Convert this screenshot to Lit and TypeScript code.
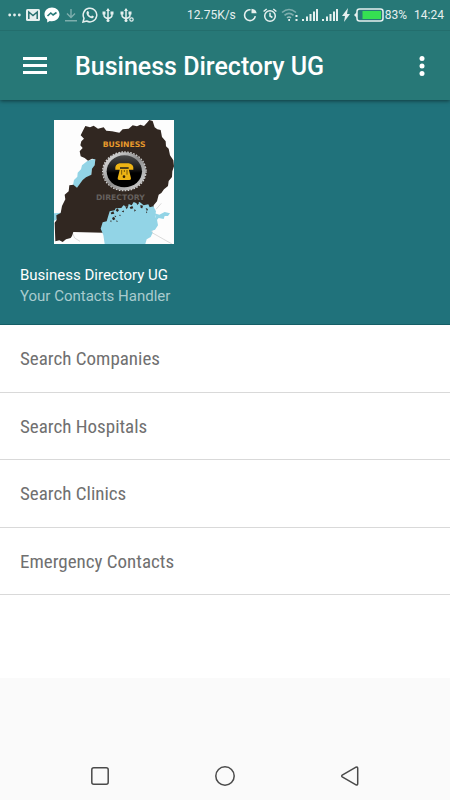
import { LitElement, html, css, svg } from "lit";
import { customElement } from "lit/decorators.js";

const usb = svg`<path d="M6 1v12M2 5v2q0 3 4 3.400q4 -.4 4 -3.400V5" fill="none" stroke="currentColor" stroke-width="1.500"/>
  <path d="M6 0l2 3H4zM.5 3.500h3v3h-3zM8.500 3.500h3v3h-3z" fill="currentColor"/><circle cx="6" cy="12.500" r="1.500" fill="currentColor"/>`;

const signal = html`<svg width="16" height="14" viewBox="0 0 16 14" fill="currentColor" aria-hidden="true">
  <path d="M0 11h2v2H0zM4 8.500h2V13H4zM7.500 6h2v7h-2zM11 3.500h2V13h-2zM14 1h2v12h-2z"/></svg>`;

@customElement("status-bar")
export class StatusBar extends LitElement {
  static styles = css`
    :host { display: flex; justify-content: space-between; align-items: center; height: 30px; padding: 0 6px 0 8px;
      color: #e6f0ef; font: 12px/16px Roboto, sans-serif; box-sizing: border-box; }
    .group { display: flex; align-items: center; gap: 4px; }
    .tight { gap: 1px; }
    .speed { padding-right: 3px; }
    .clock { padding-left: 3px; }
    svg { display: block; flex: none; }
    .faded { opacity: .45; }
  `;
  render() {
    return html`
      <div class="group">
        <svg width="14" height="14" viewBox="0 0 14 14" fill="currentColor"><circle cx="1.700" cy="7" r="1.400"/><circle cx="6.500" cy="7" r="1.400"/><circle cx="11.300" cy="7" r="1.400"/></svg>
        <svg width="14" height="12" viewBox="0 0 14 12"><rect width="14" height="12" rx="1.500" fill="currentColor"/><path d="M2.800 10V3L7 6.500 11.200 3v7" fill="none" stroke="#27706f" stroke-width="1.500"/></svg>
        <svg width="16" height="16" viewBox="0 0 16 16"><path d="M8 .5C3.500.5.500 3.500.500 7.300c0 2.200 1 4 2.700 5.200V15.500l2.600-1.500c5 1.200 9.700-2 9.700-6.700C15.500 3.500 12.300.5 8 .5z" fill="#fff"/><path d="M3.500 9l3.300-3 2.300 2 3.400-2.500" fill="none" stroke="#277877" stroke-width="1.600"/></svg>
        <svg class="faded" width="14" height="14" viewBox="0 0 14 14" fill="none" stroke="currentColor" stroke-width="1.400"><path d="M7 1v8M3 5.500l4 4 4-4M1 12.800h12"/></svg>
        <svg width="16" height="16" viewBox="0 0 16 16"><path d="M1 15l1-3.700A6.800 6.800 0 1 1 4.700 14z" fill="none" stroke="currentColor" stroke-width="1.500"/><path d="M5.200 4.300c.7-.5 1.200-.2 1.500.6l.5 1.100-.7 1c.6 1.200 1.400 1.900 2.600 2.400l.9-1 1.800.9c.1 1.300-1 2.200-2.300 2C6.900 10.800 5 9 4.500 6.600c-.1-.9.1-1.700.7-2.300z" fill="currentColor"/></svg>
        <svg width="14" height="14" viewBox="0 0 14 14">${usb}</svg>
        <svg width="15" height="14" viewBox="0 0 15 14">${usb}<circle cx="11.500" cy="11.500" r="1.700" fill="#277877" stroke="currentColor" stroke-width="1.200"/></svg>
      </div>
      <div class="group">
        <span class="speed">12.75K/s</span>
        <svg width="16" height="14" viewBox="0 0 16 14"><path d="M7.500 1.800A5.400 5.400 0 1 0 12.300 8.200" fill="none" stroke="currentColor" stroke-width="1.600"/><path d="M8.500 .8q4.500 .2 5.200 4.400H8.500z" fill="currentColor"/></svg>
        <svg width="14" height="15" viewBox="0 0 14 15" fill="none" stroke="currentColor" stroke-width="1.500"><circle cx="7" cy="8" r="5.300"/><path d="M7 4.800V8l2.400 1.500M.6 3.500L3.700 1M13.400 3.500L10.300 1"/></svg>
        <svg width="17" height="14" viewBox="0 0 17 14" fill="none" stroke="currentColor" stroke-width="1.600"><g opacity=".45"><path d="M1 4.500q7-6 14 0M3.500 7.300q4.500-4 9 0"/></g><path d="M6 9.800q2-1.500 4 0" opacity=".6"/><path d="M7.300 12h1.700M14.500 8h2M14.500 12h2" stroke-width="1.800"/></svg>
        ${signal}${signal}
        <svg width="8" height="14" viewBox="0 0 8 14" fill="currentColor"><path d="M6 0L0 8h3L2 14l6-8H5z"/></svg>
        <div class="group tight">
          <svg width="30" height="14" viewBox="0 0 30 14"><path d="M0 7l3-3v6z" fill="currentColor"/><rect x="3" y="1" width="26" height="12" rx="2.500" fill="none" stroke="currentColor" stroke-width="1.500"/><path d="M8.500 3H27v8H8.500z" fill="#35e052"/></svg>
          <span>83%</span>
        </div>
        <span class="clock">14:24</span>
      </div>`;
  }
}

@customElement("uganda-logo")
export class UgandaLogo extends LitElement {
  static styles = css`
    :host { display: block; }
    svg { display: block; width: 120px; height: 124px; }
    text { font: bold 23px "DejaVu Sans", sans-serif; }
  `;
  render() {
    return html`<svg viewBox="26 24 360 372" role="img" aria-label="Business Directory Uganda">
      <defs>
        <linearGradient id="metal" x1="0" y1="0" x2="1" y2="1"><stop offset="0" stop-color="#f0f0f0"/><stop offset=".5" stop-color="#8c8c8c"/><stop offset="1" stop-color="#dedede"/></linearGradient>
        <linearGradient id="gloss" x1="0" y1="0" x2="0" y2="1"><stop offset="0" stop-color="#4a4a4a"/><stop offset=".45" stop-color="#161616"/><stop offset=".55" stop-color="#000"/></linearGradient>
      </defs>
      <rect x="26" y="24" width="360" height="372" fill="#fdfdfd"/>
      <path d="M26 304L48 302 40 320 26 326z" fill="#92d4e6"/>
      <path d="M80 360L88 378 104 388M320 345V362L380 396M332 292L348 274" fill="none" stroke="#c8c8c8" stroke-width="2"/>
      <path d="M150 140L148 162 140 172 138 190 122 198 112 206 96 228 82 224 86 204 96 194 97 182 107 172 110 160 127 146z" fill="#92d4e6"/>
      <path d="M120 42L134 46 145 41 158 50 175 46 183 56 200 58 222 62 232 52 250 50 262 40 275 43 285 38 296 42 305 32 312 24 322 27 328 46 336 52 346 54 350 75 361 88 362 103 370 110 374 130 384 145 386 163 381 178 380 195 370 207 368 222 356 232 348 243 340 248 335 268 325 280 322 310 230 340 175 362 84 360 80 372 76 378 62 382 52 390 42 385 30 388 28 332 34 324 33 310 46 303 50 282 60 262 58 248 70 238 72 220 84 218 95 227 112 204 122 196 138 188 140 170 148 160 150 142 140 140 128 146 118 138 106 133 103 118 112 108 105 100 108 88 116 80 106 70 112 58z" fill="#312721"/>
      <path d="M178 396L174 369 166 350 172 331 184 328 188 314 193 298 208 295 211 289 228 288 234 280 248 285 250 276 259 280 265 270 274 274 283 270 295 280 309 277 313 286 324 283 332 298 329 313 335 323 338 340 329 353 318 357 322 362 316 375 304 382 300 396z" fill="#92d4e6"/>
      <path d="M328 304L342 308 358 300 374 304 368 312 358 312 355 321 340 318 333 326z" fill="#92d4e6"/>
      <path d="M196 302l8-4 3 7-9 2zM211 295l5-6 5 6-5 5zM200 318l6-4 4 8-7 3zM207 311l6 1-3 4zM229 299l6-4 1 6zM239 282l9 3-4 7zM253 286l8-4 3 7-8 2zM272 270l5-4 4 8-5 5zM285 279l8 2-2 8-5-1zM301 288l7 3-3 7zM267 292l5 3-5 4zM220 309l5-1 1 5zM194 327l4-2v6zM302 298l4 3-3 3zM213 325l5 3-4 2z" fill="#312721"/>
      <ellipse cx="237" cy="178" rx="65" ry="58" fill="none" stroke="#d0d0d0" stroke-width="4" stroke-dasharray="5 4"/>
      <ellipse cx="237" cy="178" rx="64" ry="57" fill="url(#metal)"/>
      <ellipse cx="237" cy="178" rx="53" ry="48" fill="url(#gloss)"/>
      <path d="M210 173Q208 156 223 154H250Q266 156 264 173H250V166H224V173zM224 170H250L257 199Q258 204 252 204H222Q216 204 217 199z" fill="#edb414"/>
      <path d="M229 174v14M237 174v6M245 174v14" stroke="#3a2c08" stroke-width="2"/>
      <circle cx="236" cy="194" r="4" fill="#332407"/>
      <text x="172" y="105" fill="#e89a2c">BUSINESS</text>
      <text x="152" y="264" fill="#65605d">DIRECTORY</text>
    </svg>`;
  }
}

@customElement("app-root")
export class AppRoot extends LitElement {
  static styles = css`
    :host { display: flex; flex-direction: column; min-height: 100vh; background: #fafafa; font-family: Roboto, sans-serif; }
    * { box-sizing: border-box; }
    .top { position: relative; background: #277877; box-shadow: 0 1px 4px rgba(0, 0, 0, .5); }
    .bar { display: flex; align-items: center; height: 70px; padding: 0 16px 0 20px; border-top: 1px solid #236e6d; }
    button { border: 0; padding: 0; background: none; color: inherit; font: inherit; cursor: pointer; }
    .bar button { display: grid; place-items: center; width: 30px; height: 40px; color: #fff; flex: none; }
    .bar .more { width: 24px; }
    h1 { flex: 1; margin: 0 0 0 25px; padding-top: 2px; color: #fff; font-size: 25px; line-height: 32px; font-weight: 500; }
    .profile { padding: 20px 20px 17px; background: #20727b; border-bottom: 1px solid #145e66; color: #fff; font-size: 15px; line-height: 21px; }
    uganda-logo { margin: 0 0 21px 34px; }
    .profile p { margin: 0; }
    .profile .tagline { color: #a9cbce; }
    .menu { background: #fff; padding-bottom: 83px; }
    ul { display: grid; grid-auto-rows: 1fr; min-height: 270px; margin: 0; padding: 0; list-style: none; }
    li { display: grid; border-bottom: 1px solid #d9d9d9; }
    a { display: flex; align-items: center; padding: 2px 20px 0; color: #707070; text-decoration: none;
      font-family: "Roboto Condensed", Roboto, sans-serif; font-size: 19px; line-height: 24px; }
    .nav { display: grid; grid-template-columns: repeat(3, 1fr); height: 48px; margin-top: auto; padding: 0 37px; color: #4a4a4a; }
    .nav button { display: grid; place-items: center; }
  `;
  items = ["Search Companies", "Search Hospitals", "Search Clinics", "Emergency Contacts"];
  render() {
    return html`
      <header class="top">
        <status-bar></status-bar>
        <div class="bar">
          <button aria-label="Open menu"><svg width="24" height="18" viewBox="0 0 24 18" fill="currentColor"><path d="M0 0h24v3H0zM0 7h24v3H0zM0 14h24v3H0z"/></svg></button>
          <h1>Business Directory UG</h1>
          <button class="more" aria-label="More options"><svg width="6" height="20" viewBox="0 0 6 20" fill="currentColor"><circle cx="3" cy="2.500" r="2.500"/><circle cx="3" cy="10" r="2.500"/><circle cx="3" cy="17.500" r="2.500"/></svg></button>
        </div>
      </header>
      <section class="profile">
        <uganda-logo></uganda-logo>
        <p>Business Directory UG</p>
        <p class="tagline">Your Contacts Handler</p>
      </section>
      <nav class="menu">
        <ul>${this.items.map((item) => html`<li><a href="#">${item}</a></li>`)}</ul>
      </nav>
      <footer class="nav">
        <button aria-label="Recent apps"><svg width="20" height="20" viewBox="0 0 20 20" fill="none" stroke="currentColor" stroke-width="1.500"><rect x="1.800" y="1.800" width="16.400" height="16.400" rx="2"/></svg></button>
        <button aria-label="Home"><svg width="20" height="20" viewBox="0 0 20 20" fill="none" stroke="currentColor" stroke-width="1.500"><circle cx="10" cy="10" r="9.200"/></svg></button>
        <button aria-label="Back"><svg width="20" height="20" viewBox="0 0 20 20" fill="none" stroke="currentColor" stroke-width="1.500" stroke-linejoin="round"><path d="M2.200 9.200L16 1.200q1.700-.7 1.700 1v15.600q0 1.700-1.700 1L2.200 10.800q-1-.8 0-1.600z"/></svg></button>
      </footer>`;
  }
}
